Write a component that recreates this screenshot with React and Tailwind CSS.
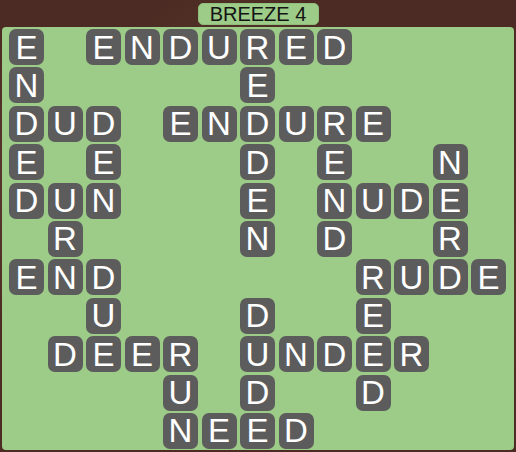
import React from "react";

// board laid out row by row, "." is an empty cell
const rows = [
  "E.ENDURED....",
  "N.....E......",
  "DUD.ENDURE...",
  "E.E...D.E..N.",
  "DUN...E.NUDE.",
  ".R....N.D..R.",
  "END......RUDE",
  "..U...D..E...",
  ".DEER.UNDER..",
  "....U.D..D...",
  "....NEED.....",
];

function Tile({ letter }) {
  return (
    <div className="w-[35px] h-[36px] rounded-[7px] bg-[#5c5c5c] flex items-center justify-center text-white text-[33px] leading-none font-['Liberation_Sans',Arial,sans-serif]">
      {letter}
    </div>
  );
}

export default function App() {
  const cells = [];
  rows.forEach((line, r) => {
    line.split("").forEach((ch, c) => {
      cells.push(
        ch === "." ? (
          <div key={`${r}-${c}`} className="w-[35px] h-[36px]" />
        ) : (
          <Tile key={`${r}-${c}`} letter={ch} />
        )
      );
    });
  });

  return (
    <div className="w-[516px] h-[452px] bg-[#4b2b23] bg-[radial-gradient(circle_at_12%_40%,#5c3a30_0,transparent_30%),radial-gradient(circle_at_45%_20%,#573529_0,transparent_25%),radial-gradient(circle_at_85%_60%,#5a382d_0,transparent_30%)] flex flex-col items-center overflow-hidden">
      <div className="mt-[3px] h-[22px] w-[121px] rounded-[5px] bg-[#9dcb88] border border-[#8fbd7b] flex items-center justify-center text-[20px] leading-none text-[#141414] font-['Liberation_Sans',Arial,sans-serif]">
        BREEZE 4
      </div>
      <div className="mt-[2px] w-[512px] h-[423px] rounded-[4px] bg-[#9dcb88] pl-[7px] pt-[2px]">
        <div className="grid grid-cols-[repeat(13,35px)] grid-rows-[repeat(11,36px)] gap-x-[3.5px] gap-y-[2.4px]">
          {cells}
        </div>
      </div>
    </div>
  );
}
